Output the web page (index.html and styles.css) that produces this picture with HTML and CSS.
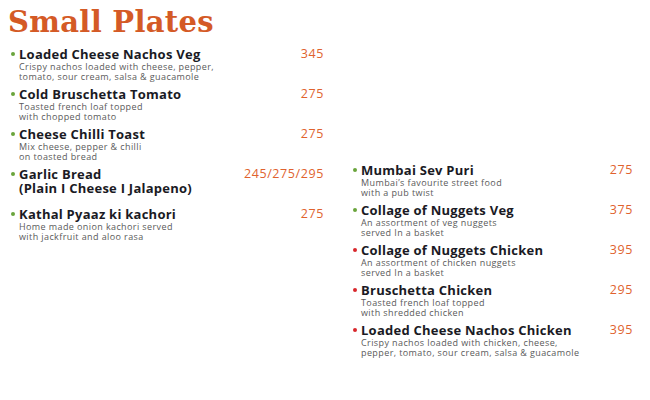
FILE: index.html
```html
<!DOCTYPE html>
<html>
<head>
<meta charset="utf-8">
<link rel="stylesheet" href="styles.css">
</head>
<body>
<div class="page">
  <h1 class="title">Small Plates</h1>
  <div class="columns">
    <div class="col col-left">
      <div class="item">
        <span class="dot veg"></span>
        <div class="body">
          <div class="head"><span class="name">Loaded Cheese Nachos Veg</span><span class="price">345</span></div>
          <div class="desc">Crispy nachos loaded with cheese, pepper,<br>tomato, sour cream, salsa &amp; guacamole</div>
        </div>
      </div>
      <div class="item">
        <span class="dot veg"></span>
        <div class="body">
          <div class="head"><span class="name">Cold Bruschetta Tomato</span><span class="price">275</span></div>
          <div class="desc">Toasted french loaf topped<br>with chopped tomato</div>
        </div>
      </div>
      <div class="item">
        <span class="dot veg"></span>
        <div class="body">
          <div class="head"><span class="name">Cheese Chilli Toast</span><span class="price">275</span></div>
          <div class="desc">Mix cheese, pepper &amp; chilli<br>on toasted bread</div>
        </div>
      </div>
      <div class="item">
        <span class="dot veg"></span>
        <div class="body">
          <div class="head"><span class="name">Garlic Bread<br>(Plain I Cheese I Jalapeno)</span><span class="price">245/275/295</span></div>
        </div>
      </div>
      <div class="item">
        <span class="dot veg"></span>
        <div class="body">
          <div class="head"><span class="name">Kathal Pyaaz ki kachori</span><span class="price">275</span></div>
          <div class="desc">Home made onion kachori served<br>with jackfruit and aloo rasa</div>
        </div>
      </div>
    </div>
    <div class="col col-right">
      <div class="item">
        <span class="dot veg"></span>
        <div class="body">
          <div class="head"><span class="name">Mumbai Sev Puri</span><span class="price">275</span></div>
          <div class="desc">Mumbai’s favourite street food<br>with a pub twist</div>
        </div>
      </div>
      <div class="item">
        <span class="dot veg"></span>
        <div class="body">
          <div class="head"><span class="name">Collage of Nuggets Veg</span><span class="price">375</span></div>
          <div class="desc">An assortment of veg nuggets<br>served In a basket</div>
        </div>
      </div>
      <div class="item">
        <span class="dot nonveg"></span>
        <div class="body">
          <div class="head"><span class="name">Collage of Nuggets Chicken</span><span class="price">395</span></div>
          <div class="desc">An assortment of chicken nuggets<br>served In a basket</div>
        </div>
      </div>
      <div class="item">
        <span class="dot nonveg"></span>
        <div class="body">
          <div class="head"><span class="name">Bruschetta Chicken</span><span class="price">295</span></div>
          <div class="desc">Toasted french loaf topped<br>with shredded chicken</div>
        </div>
      </div>
      <div class="item">
        <span class="dot nonveg"></span>
        <div class="body">
          <div class="head"><span class="name">Loaded Cheese Nachos Chicken</span><span class="price">395</span></div>
          <div class="desc">Crispy nachos loaded with chicken, cheese,<br>pepper, tomato, sour cream, salsa &amp; guacamole</div>
        </div>
      </div>
    </div>
  </div>
</div>
</body>
</html>
```
FILE: styles.css
```css
html, body {
  margin: 0;
  padding: 0;
  background: #ffffff;
}
.page {
  width: 650px;
  height: 400px;
  box-sizing: border-box;
  padding: 5px 0 0 8px;
  font-family: "Open Sans", sans-serif;
}
.title {
  margin: 0;
  font-family: "DejaVu Serif", serif;
  font-weight: bold;
  font-size: 29px;
  line-height: 34px;
  color: #d45a26;
  letter-spacing: 0.3px;
}
.columns {
  display: flex;
  margin-top: 8px;
}
.col {
  display: flex;
  flex-direction: column;
  gap: 5px;
}
.col-left {
  width: 316px;
}
.col-right {
  width: 283px;
  margin-left: 26px;
  margin-top: 116px;
}
.item {
  display: flex;
  align-items: flex-start;
  min-height: 35px;
}
.dot {
  flex: none;
  width: 4px;
  height: 4px;
  border-radius: 50%;
  margin: 5px 4px 0 3px;
}
.veg { background: #6aa43c; }
.nonveg { background: #d8262c; }
.body {
  flex: 1;
}
.head {
  display: flex;
  justify-content: space-between;
  align-items: flex-start;
}
.name {
  font-weight: 700;
  font-size: 13px;
  line-height: 14px;
  letter-spacing: 0.25px;
  color: #1a1a24;
}
.price {
  font-size: 12.5px;
  line-height: 14px;
  letter-spacing: 0.6px;
  color: #e0622e;
  font-weight: 400;
}
.desc {
  margin-top: 1px;
  font-size: 9px;
  line-height: 10px;
  letter-spacing: 0.4px;
  color: #5a5a5a;
}
```
